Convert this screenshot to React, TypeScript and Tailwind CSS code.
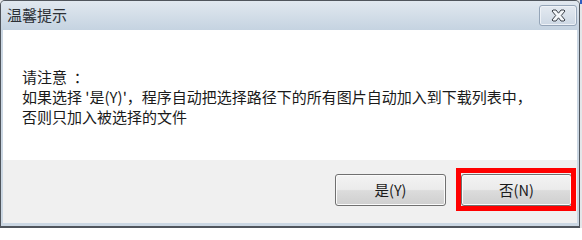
import type { ReactNode } from 'react';

function CloseGlyph() {
    return (
        <svg width="15" height="13" viewBox="0 0 15 13" aria-hidden="true">
            <polygon
                points="1,2 2,1 5,1 7.5,4.2 10,1 13,1 14,2 10.3,6.5 14,11 13,12 10,12 7.5,8.8 5,12 2,12 1,11 4.7,6.5"
                fill="#f4f7fa"
                stroke="#3b4048"
                strokeWidth="1"
                strokeLinejoin="round"
            />
        </svg>
    );
}

function DialogButton({ children }: { children: ReactNode }) {
    return (
        <button
            type="button"
            className="flex h-[32px] w-[111px] items-center justify-center rounded-[3px] border border-[#707070] bg-[linear-gradient(to_bottom,#f3f3f3_0%,#ebebeb_48%,#dcdcdc_52%,#cfcfcf_100%)] text-[14.5px] text-[#1a1a1a] shadow-[inset_0_0_0_1px_#fbfbfb]"
        >
            {children}
        </button>
    );
}

export default function App() {
    return (
        <div className="flex h-[228px] w-[582px] bg-[#e4e6e9] font-['Noto_Sans_CJK_SC','Noto_Sans',sans-serif]">
            <div className="flex h-[228px] w-[580px] flex-col rounded-t-[5px] border border-b-2 border-[#50555c] bg-[#cbd7e3]">
                {/* 标题栏 */}
                <div className="flex h-[29px] items-start justify-between rounded-t-[4px] bg-gradient-to-b from-[#e1e8ef] to-[#c5d3e1] pl-[6px] pr-[2px]">
                    <span className="mt-[4px] text-[15px] leading-[20px] text-[#2c3036]">温馨提示</span>
                    <div className="mt-[4px] flex h-[21px] w-[38px] items-center justify-center rounded-[3px] border border-[#95a5b8] bg-gradient-to-b from-[#e4eaf1] to-[#cdd8e4] shadow-[inset_0_0_0_1px_#eef2f7]">
                        <CloseGlyph />
                    </div>
                </div>

                <div className="mx-[2px] mb-[3px] flex flex-1 flex-col">
                    {/* 内容 */}
                    <div className="h-[130px] bg-white pl-[19px] pt-[37px] text-[15px] leading-[20px] text-[#1a1a1a]">
                        <div>请注意&nbsp; ：</div>
                        <div>如果选择 '是(Y)'，程序自动把选择路径下的所有图片自动加入到下载列表中，</div>
                        <div>否则只加入被选择的文件</div>
                    </div>

                    {/* 按钮区 */}
                    <div className="flex flex-1 items-start justify-end gap-[15px] bg-[#f0f0f0] pr-[5px] pt-[14px]">
                        <DialogButton>是(Y)</DialogButton>
                        <div className="relative">
                            <DialogButton>否(N)</DialogButton>
                            <div className="pointer-events-none absolute -bottom-[5px] -left-[5px] -right-[4px] -top-[6px] border-[5px] border-[#ff0000]" />
                        </div>
                    </div>
                </div>
            </div>
            <div className="flex w-[2px] flex-col">
                <div className="h-[4px] bg-[#2d5cc0]" />
            </div>
        </div>
    );
}
